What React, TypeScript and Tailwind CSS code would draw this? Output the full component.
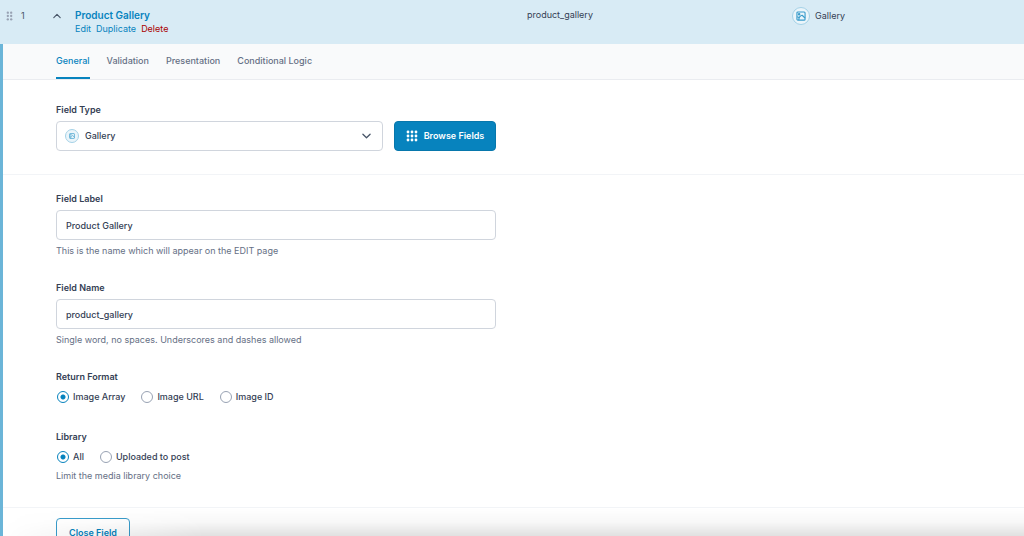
import { useState, type FC, type InputHTMLAttributes, type ReactNode } from "react";
import { clsx } from "clsx";

const tabs = ["General", "Validation", "Presentation", "Conditional Logic"];
const returnFormats = ["Image Array", "Image URL", "Image ID"];
const libraries = ["All", "Uploaded to post"];

const GalleryIcon: FC<{ className?: string }> = ({ className }) => (
  <svg
    className={className}
    viewBox="0 0 16 16"
    fill="none"
    stroke="currentColor"
    strokeWidth="1.8"
    strokeLinejoin="round"
    aria-hidden="true"
  >
    <rect x="1.5" y="1.5" width="13" height="13" rx="1.5" />
    <circle cx="5" cy="5" r="1.1" />
    <path d="M4.5 14.2c0-4 2-6.4 5.3-7.4l4.6 4.4M2 9.2l3.4 1.6" />
  </svg>
);

const DotGrid: FC<{ className?: string; columns: number; rows: number }> = ({
  className,
  columns,
  rows,
}) => (
  <svg
    className={className}
    viewBox={`0 0 ${columns * 4} ${rows * 4}`}
    fill="currentColor"
    aria-hidden="true"
  >
    {Array.from({ length: columns * rows }, (_, i) => (
      <circle
        key={i}
        cx={(i % columns) * 4 + 2}
        cy={Math.floor(i / columns) * 4 + 2}
        r="1.4"
      />
    ))}
  </svg>
);

const Chevron: FC<{ className?: string }> = ({ className }) => (
  <svg
    className={className}
    viewBox="0 0 10 6"
    fill="none"
    stroke="currentColor"
    strokeWidth="1.4"
    strokeLinecap="round"
    strokeLinejoin="round"
    aria-hidden="true"
  >
    <path d="m1 1 4 4 4-4" />
  </svg>
);

const Hint: FC<{ children: ReactNode }> = ({ children }) => (
  <p className="font-normal leading-4 text-[#667085]">{children}</p>
);

interface TextFieldProps extends InputHTMLAttributes<HTMLInputElement> {
  id: string;
  label: string;
  hint: string;
}

const TextField: FC<TextFieldProps> = ({ id, label, hint, ...props }) => (
  <div className="flex flex-col gap-[3px]">
    <label htmlFor={id} className="font-semibold leading-4">
      {label}
    </label>
    <input
      {...props}
      id={id}
      type="text"
      className="h-[30px] w-full rounded-[4px] border border-[#d0d5dd] bg-white px-[9px] outline-none focus:border-[#399ccb]"
    />
    <Hint>{hint}</Hint>
  </div>
);

interface RadioFieldProps {
  name: string;
  label: string;
  options: string[];
  hint?: string;
}

const RadioField: FC<RadioFieldProps> = ({ name, label, options, hint }) => (
  <fieldset>
    <legend className="font-semibold leading-4">{label}</legend>
    <div className="flex h-[23px] items-center gap-[15px]">
      {options.map((option, i) => (
        <label key={option} className="flex items-center gap-1">
          <input
            type="radio"
            name={name}
            defaultChecked={i === 0}
            className="ml-px size-3 appearance-none rounded-full border border-[#98a2b3] bg-white checked:border-[#0783be] checked:bg-[radial-gradient(circle,#0783be_2px,white_3px)]"
          />
          {option}
        </label>
      ))}
    </div>
    {hint && <Hint>{hint}</Hint>}
  </fieldset>
);

const FieldHeader = () => (
  <header className="grid h-11 grid-cols-[75px_452px_265px_1fr] bg-[#d8ebf5] pt-[7px] font-normal">
    <div className="flex h-[18px] items-center text-[#475467]">
      <DotGrid className="ml-[6px] h-[10px] w-[7px] text-[#98a2b3]" columns={2} rows={3} />
      <span className="ml-2">1</span>
      <button type="button" aria-label="Collapse field" className="ml-7">
        <Chevron className="h-[6px] w-[8px] rotate-180" />
      </button>
    </div>
    <div>
      <a href="#field" className="block text-[10px] font-semibold leading-4 text-[#0783be]">
        Product Gallery
      </a>
      <nav className="flex gap-[5px] leading-[11px] text-[#0783be]">
        <a href="#edit">Edit</a>
        <a href="#duplicate">Duplicate</a>
        <a href="#delete" className="text-[#a00]">
          Delete
        </a>
      </nav>
    </div>
    <span className="leading-4">product_gallery</span>
    <div className="flex h-[18px] items-center gap-[5px]">
      <span className="flex size-[18px] items-center justify-center rounded-full border border-[#a5d2e7] bg-[#ebf5fa] text-[#399ccb]">
        <GalleryIcon className="size-[10px]" />
      </span>
      Gallery
    </div>
  </header>
);

export default function App() {
  const [activeTab, setActiveTab] = useState("General");

  return (
    <div className="relative h-screen overflow-hidden bg-white font-['Inter',sans-serif] text-[9px] font-medium text-[#344054]">
      <FieldHeader />
      <main className="border-l-[3px] border-[#6bb5d8]">
        <div
          role="tablist"
          className="flex h-9 gap-[17px] border-b border-[#eaecf0] bg-[#f9fafb] pl-[53px] text-[#667085]"
        >
          {tabs.map((tab) => (
            <button
              key={tab}
              type="button"
              role="tab"
              aria-selected={tab === activeTab}
              onClick={() => setActiveTab(tab)}
              className={clsx(
                "border-b-2",
                tab === activeTab ? "border-[#0783be] text-[#0783be]" : "border-transparent"
              )}
            >
              {tab}
            </button>
          ))}
        </div>

        <section className="border-b border-[#f2f4f7] pt-[22px] pb-[23px] pl-[53px]">
          <div className="flex max-w-[440px] flex-col gap-[3px]">
            <label htmlFor="field-type" className="font-semibold leading-4">
              Field Type
            </label>
            <div className="flex gap-[11px]">
              <div className="relative flex-1">
                <select
                  id="field-type"
                  className="h-[30px] w-full appearance-none rounded-[4px] border border-[#d0d5dd] bg-white pl-7 outline-none"
                >
                  <option>Gallery</option>
                </select>
                <span className="pointer-events-none absolute inset-y-0 left-[9px] flex items-center">
                  <span className="flex size-[14px] items-center justify-center rounded-full border border-[#a5d2e7] bg-[#ebf5fa] text-[#399ccb]">
                    <GalleryIcon className="size-[6px]" />
                  </span>
                </span>
                <span className="pointer-events-none absolute inset-y-0 right-3 flex items-center text-[#475467]">
                  <Chevron className="h-[6px] w-[9px]" />
                </span>
              </div>
              <button
                type="button"
                className="flex h-[30px] w-[102px] items-center justify-center gap-[6px] rounded-[4px] border border-[#0777ac] bg-[#0783be] font-semibold text-white"
              >
                <DotGrid className="size-3" columns={3} rows={3} />
                Browse Fields
              </button>
            </div>
          </div>
        </section>

        <section className="border-b border-[#f2f4f7] pt-4 pb-[23px] pl-[53px]">
          <div className="flex max-w-[440px] flex-col gap-[21px]">
            <TextField
              id="field-label"
              label="Field Label"
              defaultValue="Product Gallery"
              hint="This is the name which will appear on the EDIT page"
            />
            <TextField
              id="field-name"
              label="Field Name"
              defaultValue="product_gallery"
              hint="Single word, no spaces. Underscores and dashes allowed"
            />
            <RadioField name="return-format" label="Return Format" options={returnFormats} />
            <RadioField
              name="library"
              label="Library"
              options={libraries}
              hint="Limit the media library choice"
            />
          </div>
        </section>

        <footer className="pt-[10px] pl-[53px]">
          <button
            type="button"
            className="h-[30px] w-[74px] rounded-[4px] border border-[#399ccb] font-semibold text-[#0783be]"
          >
            Close Field
          </button>
        </footer>
      </main>
      <div className="pointer-events-none absolute inset-x-0 bottom-0 h-7 bg-linear-to-b from-transparent via-black/3 to-black/12 [mask-image:linear-gradient(to_right,transparent,black_20%)]" />
    </div>
  );
}
